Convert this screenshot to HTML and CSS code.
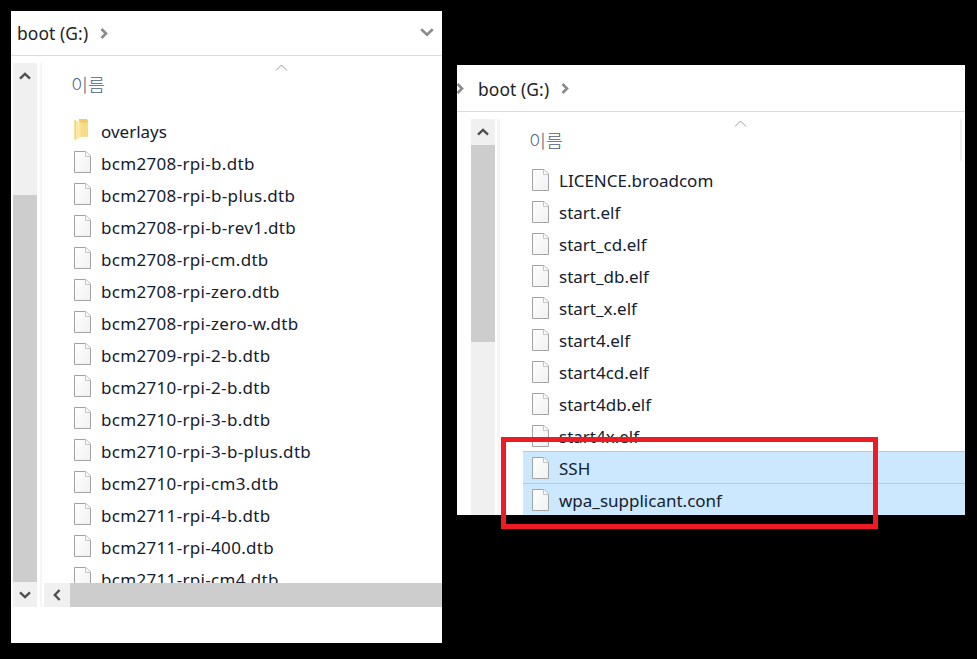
FILE: index.html
```
<!DOCTYPE html>
<html lang="ko">
<head>
<meta charset="utf-8">
<title>boot (G:)</title>
<link rel="stylesheet" href="styles.css">
</head>
<body>
<svg class="defs" width="0" height="0" aria-hidden="true">
  <defs>
    <linearGradient id="pg" x1="0" y1="0" x2="1" y2="1"><stop offset="0" stop-color="#ffffff"/><stop offset="1" stop-color="#f0f1f2"/></linearGradient>
    <symbol id="file" viewBox="0 0 17 22">
      <path d="M.5.5H12L16.5 5V21.5H.5Z" fill="url(#pg)" stroke="#a3a3a3"/>
      <path d="M11.5.5V5.5H16.5" fill="#fff" stroke="#c4c4c4"/>
    </symbol>
    <symbol id="folder" viewBox="0 0 15 22">
      <path d="M5 0H13L14 2V17.5H5Z" fill="#efcb66"/>
      <path d="M6 3.5H14V17.5H6Z" fill="#f8db84"/>
      <path d="M.5 1L6.5 3V18L2 21L.5 20Z" fill="#fce8a6"/>
      <path d="M.5 1L1.8 1.4V20.8L.5 20Z" fill="#f2cf6f"/>
    </symbol>
    <symbol id="crumb" viewBox="0 0 8 11"><path d="M1.5 1L6 5.5L1.5 10" fill="none" stroke="#8a8a8a" stroke-width="2.6"/></symbol>
  </defs>
</svg>

<section class="window win-a">
  <header class="crumbs">
    <span class="crumb-text">boot (G:)</span>
    <svg class="crumb-icon"><use href="#crumb"/></svg>
    <svg class="drop" viewBox="0 0 14 9"><path d="M1.2 1.2L7 6.8L12.8 1.2" fill="none" stroke="#8c8c8c" stroke-width="2.6"/></svg>
  </header>
  <div class="pane">
    <div class="vscroll">
      <div class="vbtn"><svg class="arrow" viewBox="0 0 12 8"><path d="M1 6.6L6 1.8L11 6.6" fill="none" stroke="#505050" stroke-width="2.4"/></svg></div>
      <div class="vtrack"></div>
      <div class="vthumb"></div>
      <div class="vbtn vbtn-end"><svg class="arrow" viewBox="0 0 12 8"><path d="M1 1.4L6 6.2L11 1.4" fill="none" stroke="#505050" stroke-width="2.4"/></svg></div>
    </div>
    <div class="strip"></div>
    <div class="content">
      <div class="list">
        <div class="colhead">
          <svg class="sort" viewBox="0 0 13 7"><path d="M1 6.5L6.5 1L12 6.5" fill="none" stroke="#9a9a9a"/></svg>
          <span class="colname">이름</span>
        </div>
        <div class="row"><svg class="ico folder-ico"><use href="#folder"/></svg><span>overlays</span></div>
        <div class="row wide"><svg class="ico"><use href="#file"/></svg><span>bcm2708-rpi-b.dtb</span></div>
        <div class="row wide"><svg class="ico"><use href="#file"/></svg><span>bcm2708-rpi-b-plus.dtb</span></div>
        <div class="row wide"><svg class="ico"><use href="#file"/></svg><span>bcm2708-rpi-b-rev1.dtb</span></div>
        <div class="row wide"><svg class="ico"><use href="#file"/></svg><span>bcm2708-rpi-cm.dtb</span></div>
        <div class="row wide"><svg class="ico"><use href="#file"/></svg><span>bcm2708-rpi-zero.dtb</span></div>
        <div class="row wide"><svg class="ico"><use href="#file"/></svg><span>bcm2708-rpi-zero-w.dtb</span></div>
        <div class="row wide"><svg class="ico"><use href="#file"/></svg><span>bcm2709-rpi-2-b.dtb</span></div>
        <div class="row wide"><svg class="ico"><use href="#file"/></svg><span>bcm2710-rpi-2-b.dtb</span></div>
        <div class="row wide"><svg class="ico"><use href="#file"/></svg><span>bcm2710-rpi-3-b.dtb</span></div>
        <div class="row wide"><svg class="ico"><use href="#file"/></svg><span>bcm2710-rpi-3-b-plus.dtb</span></div>
        <div class="row wide"><svg class="ico"><use href="#file"/></svg><span>bcm2710-rpi-cm3.dtb</span></div>
        <div class="row wide"><svg class="ico"><use href="#file"/></svg><span>bcm2711-rpi-4-b.dtb</span></div>
        <div class="row wide"><svg class="ico"><use href="#file"/></svg><span>bcm2711-rpi-400.dtb</span></div>
        <div class="row wide"><svg class="ico"><use href="#file"/></svg><span>bcm2711-rpi-cm4.dtb</span></div>
      </div>
      <div class="hscroll">
        <div class="hbtn"><svg class="arrow-h" viewBox="0 0 8 12"><path d="M6.6 1L1.8 6L6.6 11" fill="none" stroke="#505050" stroke-width="2.4"/></svg></div>
        <div class="hthumb"></div>
      </div>
    </div>
  </div>
</section>

<section class="window win-b">
  <header class="crumbs">
    <svg class="crumb-icon crumb-cut"><use href="#crumb"/></svg>
    <span class="crumb-text">boot (G:)</span>
    <svg class="crumb-icon"><use href="#crumb"/></svg>
  </header>
  <div class="pane">
    <div class="vscroll">
      <div class="vbtn"><svg class="arrow" viewBox="0 0 12 8"><path d="M1 6.6L6 1.8L11 6.6" fill="none" stroke="#505050" stroke-width="2.4"/></svg></div>
      <div class="vthumb"></div>
      <div class="vtrack"></div>
    </div>
    <div class="strip"></div>
    <div class="content">
      <div class="list">
        <div class="colhead">
          <svg class="sort" viewBox="0 0 13 7"><path d="M1 6.5L6.5 1L12 6.5" fill="none" stroke="#9a9a9a"/></svg>
          <span class="colname">이름</span>
        </div>
        <div class="row"><svg class="ico"><use href="#file"/></svg><span>LICENCE.broadcom</span></div>
        <div class="row"><svg class="ico"><use href="#file"/></svg><span>start.elf</span></div>
        <div class="row"><svg class="ico"><use href="#file"/></svg><span>start_cd.elf</span></div>
        <div class="row"><svg class="ico"><use href="#file"/></svg><span>start_db.elf</span></div>
        <div class="row"><svg class="ico"><use href="#file"/></svg><span>start_x.elf</span></div>
        <div class="row"><svg class="ico"><use href="#file"/></svg><span>start4.elf</span></div>
        <div class="row"><svg class="ico"><use href="#file"/></svg><span>start4cd.elf</span></div>
        <div class="row"><svg class="ico"><use href="#file"/></svg><span>start4db.elf</span></div>
        <div class="row row-last"><svg class="ico"><use href="#file"/></svg><span>start4x.elf</span></div>
        <div class="row selected"><svg class="ico"><use href="#file"/></svg><span>SSH</span></div>
        <div class="row selected"><svg class="ico"><use href="#file"/></svg><span>wpa_supplicant.conf</span></div>
      </div>
    </div>
    <div class="edge"></div>
  </div>
</section>

<div class="highlight"></div>
</body>
</html>
```

FILE: styles.css
```
html, body {
  margin: 0;
  padding: 0;
  height: 100%;
  background: #000;
  overflow: hidden;
}
body {
  width: 977px;
  height: 659px;
  position: relative;
  font-family: "Noto Sans", "Noto Sans CJK KR", sans-serif;
  color: #1a1a1a;
}
.defs { position: absolute; }

.window {
  position: absolute;
  background: #fff;
  overflow: hidden;
  display: flex;
  flex-direction: column;
}
.win-a { left: 11px; top: 11px; width: 431px; height: 632px; }
.win-b { left: 457px; top: 65px; width: 508px; height: 450px; }

.crumbs {
  height: 44px;
  flex: none;
  box-sizing: content-box;
  border-bottom: 1px solid #dcdcdc;
  display: flex;
  align-items: center;
  position: relative;
}
.win-a .crumbs { padding-left: 6px; }
.win-b .crumbs { padding-left: 21px; height: 46px; }
.win-b .crumb-text { position: relative; top: 1px; }
.crumb-text {
  font-size: 17.4px;
  color: #222;
  letter-spacing: 0.1px;
}
.crumb-icon { width: 8px; height: 11px; margin-left: 12px; }
.crumb-cut { position: absolute; left: -1px; top: 18px; margin: 0; }
.drop {
  position: absolute;
  right: 8px;
  top: 17px;
  width: 14px;
  height: 9px;
}

.pane {
  display: flex;
  flex: none;
  margin-top: 7px;
}
.win-a .pane { height: 544px; margin-left: 2px; }
.win-b .pane { height: 396px; margin-left: 14px; position: relative; }

.vscroll {
  width: 24px;
  flex: none;
  display: flex;
  flex-direction: column;
  background: #f0f0f0;
}
.vbtn {
  height: 26px;
  flex: none;
  display: flex;
  align-items: center;
  justify-content: center;
  background: #f0f0f0;
}
.vbtn-end { height: 25px; }
.arrow { width: 12px; height: 8px; }
.vtrack { flex: none; background: #f0f0f0; }
.win-a .vtrack { height: 106px; }
.win-a .vthumb { flex: 1; background: #cdcdcd; }
.win-b .vthumb { height: 197px; flex: none; background: #cdcdcd; }
.win-b .vtrack { flex: 1; }

.strip {
  width: 2px;
  flex: none;
  margin-left: 3px;
  background: #f5f5f5;
}
.win-b .strip { width: 3px; margin-left: 2px; }
.content {
  flex: 1;
  min-width: 0;
  display: flex;
  flex-direction: column;
  margin-left: 2px;
}
.list {
  flex: 1;
  min-height: 0;
  overflow: hidden;
}
.colhead {
  position: relative;
  display: flex;
  align-items: center;
}
.win-a .colhead { height: 50px; padding-left: 27px; padding-bottom: 8px; box-sizing: border-box; }
.win-b .colhead { height: 45px; padding-left: 27px; padding-bottom: 3px; box-sizing: border-box; }
.colname {
  font-size: 18.5px;
  color: #4c607a;
  font-family: "Noto Sans CJK KR", sans-serif;
  font-weight: 300;
}
.sort {
  position: absolute;
  top: 1px;
  width: 13px;
  height: 7px;
}
.win-a .sort { left: 231px; }
.win-b .sort { left: 232px; }

.row {
  height: 32px;
  box-sizing: border-box;
  display: flex;
  align-items: center;
  font-size: 17px;
  line-height: 32px;
  color: #14202e;
  white-space: nowrap;
}
.win-a .row { padding-left: 30px; }
.win-b .row { margin-left: 21px; padding-left: 9px; }
.row span { margin-left: 10px; }
.win-a .row span { position: relative; top: 3px; }
.win-a .ico { position: relative; top: 1px; }
.win-b .row span { position: relative; top: 1px; }
.wide { letter-spacing: 0.32px; }
.ico { width: 17px; height: 22px; flex: none; }
.folder-ico { width: 15px; margin-right: 2px; }
.win-b .row-last { height: 31px; }
.selected {
  background: #cce8ff;
  border-top: 1px solid #99d1ff;
}
.hscroll {
  height: 24px;
  flex: none;
  display: flex;
  background: #f0f0f0;
}
.hbtn {
  width: 26px;
  flex: none;
  display: flex;
  align-items: center;
  justify-content: center;
}
.arrow-h { width: 8px; height: 12px; }
.hthumb { flex: 1; background: #cdcdcd; }
.edge {
  position: absolute;
  left: 489px;
  top: 0;
  width: 2px;
  height: 42px;
  background: #f0f0f0;
}

.highlight {
  position: absolute;
  left: 501px;
  top: 437px;
  width: 377px;
  height: 92px;
  box-sizing: border-box;
  border: 5px solid #ed1c24;
}
```
